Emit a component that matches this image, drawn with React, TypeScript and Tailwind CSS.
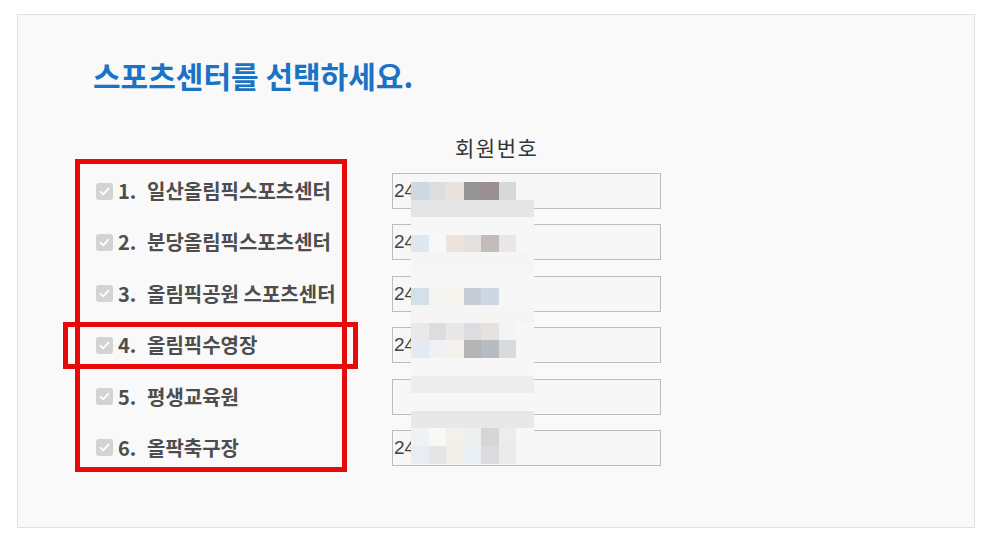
import React from "react";

const centers = [
  { no: "1.", name: "일산올림픽스포츠센터", value: "24" },
  { no: "2.", name: "분당올림픽스포츠센터", value: "24" },
  { no: "3.", name: "올림픽공원 스포츠센터", value: "24" },
  { no: "4.", name: "올림픽수영장", value: "24" },
  { no: "5.", name: "평생교육원", value: "" },
  { no: "6.", name: "올팍축구장", value: "24" },
];

// blurred member numbers, 7 cells per row
const F = "bg-[#f7f7f7]";
const mosaic: string[][] = [
  ["bg-[#ccd8e2]", "bg-[#dcdedd]", "bg-[#e8e3dd]", "bg-[#959595]", "bg-[#9b8e91]", "bg-[#d8d8dc]", F],
  ["bg-[#e5e5e5]", "bg-[#e5e5e5]", "bg-[#e5e5e5]", "bg-[#e5e5e5]", "bg-[#e5e5e5]", "bg-[#e5e5e5]", "bg-[#e5e5e5]"],
  [F, F, F, F, F, F, F],
  ["bg-[#dfe8f0]", "bg-[#f7f8f8]", "bg-[#ede5dc]", "bg-[#e3e0de]", "bg-[#c4bbbb]", "bg-[#e9e8e6]", F],
  ["bg-[#f5f5f5]", "bg-[#f5f5f5]", "bg-[#f5f5f5]", "bg-[#f5f5f5]", "bg-[#f5f5f5]", "bg-[#f5f5f5]", "bg-[#f5f5f5]"],
  [F, F, F, F, F, F, F],
  ["bg-[#d4e0e8]", "bg-[#f4f5f2]", "bg-[#f6f5ee]", "bg-[#c7cbd3]", "bg-[#ccd7e3]", F, F],
  ["bg-[#f5f5f5]", "bg-[#f5f5f5]", "bg-[#f5f5f5]", "bg-[#f5f5f5]", "bg-[#f5f5f5]", "bg-[#f5f5f5]", "bg-[#f5f5f5]"],
  ["bg-[#e9e9e9]", "bg-[#dcdedd]", "bg-[#e8e8e8]", "bg-[#dcdde0]", "bg-[#e5e2df]", "bg-[#f2f4f6]", F],
  ["bg-[#e3eaf2]", "bg-[#eef0f3]", "bg-[#f5f2ed]", "bg-[#b4b4b4]", "bg-[#b6bbc4]", "bg-[#d9dadc]", F],
  [F, F, F, F, F, F, F],
  ["bg-[#ededed]", "bg-[#ededed]", "bg-[#ededed]", "bg-[#ededed]", "bg-[#ededed]", "bg-[#ededed]", "bg-[#ededed]"],
  [F, F, F, F, F, F, F],
  ["bg-[#e8e8e8]", "bg-[#e8e8e8]", "bg-[#e8e8e8]", "bg-[#e8e8e8]", "bg-[#e8e8e8]", "bg-[#e8e8e8]", "bg-[#e8e8e8]"],
  ["bg-[#eff2f5]", "bg-[#f8f8f6]", "bg-[#f3efea]", "bg-[#ebf0ee]", "bg-[#d7d6d4]", "bg-[#ececec]", F],
  ["bg-[#e8ecf3]", "bg-[#e5e5e8]", "bg-[#f1ede7]", "bg-[#eaeff3]", "bg-[#dbdbde]", "bg-[#ebeae8]", F],
];

const CheckedBox = () => (
  <span className="flex h-[17px] w-[17px] shrink-0 items-center justify-center rounded-[3px] bg-[#d3d3d3]">
    <svg width="13" height="13" viewBox="0 0 13 13" fill="none">
      <path d="M2.5 6.8 L5.2 9.3 L10.5 3.6" stroke="#ffffff" strokeWidth="1.8" strokeLinecap="round" strokeLinejoin="round" />
    </svg>
  </span>
);

export default function App() {
  return (
    <div className="relative h-[535px] w-[981px] bg-white pl-[17px] pt-[14px] font-['Noto_Sans_CJK_KR',sans-serif]">
      <div className="h-[514px] w-[958px] border border-[#e2e2e2] bg-[#f9f9f9]">
        {/* Title */}
        <h2 className="ml-[75px] mt-[42px] h-[36px] text-[30px] font-bold leading-[36px] text-[#1a73c4]">
          스포츠센터를 선택하세요.
        </h2>

        {/* Column header */}
        <div className="ml-[437px] mt-[42px] h-[24px] text-[21px] leading-[24px] tracking-[1.5px] text-[#333]">회원번호</div>

        {/* Center rows */}
        <div className="mt-[14px] flex flex-col gap-[15.4px]">
          {centers.map((c) => (
            <div key={c.no} className="flex h-[36px] items-center">
              <label className="flex w-[374px] items-center pl-[78px] text-[20px] font-bold leading-[24px] text-[#4d4d4d]">
                <CheckedBox />
                <span className="ml-[5px] w-[29px]">{c.no}</span>
                <span className="whitespace-nowrap">{c.name}</span>
              </label>
              <input
                readOnly
                value={c.value}
                className="h-[36px] w-[269px] border border-[#bdbdbd] bg-[#f7f7f7] px-[1px] font-['Liberation_Sans',sans-serif] text-[19px] text-[#444] outline-none"
              />
            </div>
          ))}
        </div>
      </div>

      {/* Privacy mosaic over the member numbers */}
      <div className="absolute left-[411px] top-[182px] grid h-[281.6px] w-[123px] grid-cols-7 grid-rows-[repeat(16,minmax(0,1fr))]">
        {mosaic.flatMap((row, r) => row.map((cls, i) => <div key={`${r}-${i}`} className={cls} />))}
      </div>

      {/* Red annotation boxes */}
      <div className="pointer-events-none absolute left-[75px] top-[159px] h-[313px] w-[272px] border-[5px] border-[#e60a0a]" />
      <div className="pointer-events-none absolute left-[63px] top-[322px] h-[47px] w-[295px] border-[5px] border-[#e60a0a]" />
    </div>
  );
}
